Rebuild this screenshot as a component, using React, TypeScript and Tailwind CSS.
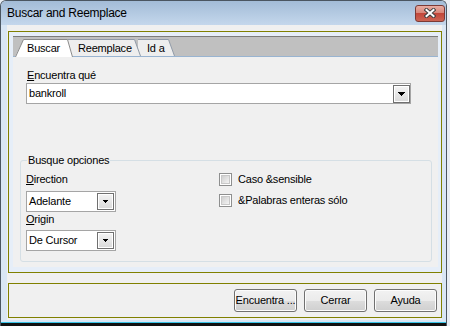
import type { ReactNode } from 'react';

function Arrow({ small }: { small?: boolean }) {
  return small ? (
    <svg width="5" height="3" viewBox="0 0 5 3" shapeRendering="crispEdges">
      <rect x="0" y="0" width="5" height="1" fill="#000" />
      <rect x="1" y="1" width="3" height="1" fill="#000" />
      <rect x="2" y="2" width="1" height="1" fill="#000" />
    </svg>
  ) : (
    <svg width="7" height="4" viewBox="0 0 7 4" shapeRendering="crispEdges">
      <rect x="0" y="0" width="7" height="1" fill="#000" />
      <rect x="1" y="1" width="5" height="1" fill="#000" />
      <rect x="2" y="2" width="3" height="1" fill="#000" />
      <rect x="3" y="3" width="1" height="1" fill="#000" />
    </svg>
  );
}

function Combo({ text, small, className }: { text: string; small?: boolean; className: string }) {
  return (
    <div className={`flex h-[21px] items-center border border-[#a5a5a5] bg-white pl-[2px] ${className}`}>
      <span className="flex-1 leading-[13px]">{text}</span>
      <div
        className={`flex items-center justify-center border border-[#707070] bg-[linear-gradient(to_bottom,#f4f4f4,#d9d9d9)] shadow-[inset_1px_1px_0_#fff,inset_-1px_-1px_0_#fff] ${
          small ? 'mr-[1px] h-[17px] w-[17px]' : 'mt-[1px] h-[18px] w-[17px]'
        }`}
      >
        <Arrow small={small} />
      </div>
    </div>
  );
}

function CheckRow({ label, className = '' }: { label: string; className?: string }) {
  return (
    <div className={`flex h-[13px] items-center ${className}`}>
      <div className="h-[13px] w-[13px] border border-[#8e8f8f] bg-white p-[1px]">
        <div className="h-full w-full border border-[#c8c8c8] bg-[linear-gradient(135deg,#cfcfcf,#f4f4f4)]" />
      </div>
      <span className="ml-[6px] leading-[13px]">{label}</span>
    </div>
  );
}

function Button({ children }: { children: ReactNode }) {
  return (
    <div className="flex h-[23px] w-[63px] items-center justify-center rounded-[3px] border border-[#707070] bg-[linear-gradient(to_bottom,#f2f2f2_0%,#ebebeb_50%,#dddddd_50%,#cfcfcf_100%)] shadow-[inset_0_0_0_1px_#fcfcfc] whitespace-nowrap">
      {children}
    </div>
  );
}

function Tab({
  width,
  textLeft,
  label,
  active,
  path,
  fill,
  className,
}: {
  width: number;
  textLeft: string;
  label: string;
  active?: boolean;
  path: string;
  fill: string;
  className: string;
}) {
  return (
    <div className={`relative h-[20px] ${className}`} style={{ width }}>
      <svg className="absolute inset-0" width={width} height="20" viewBox={`0 0 ${width} 20`}>
        <polygon points={fill} fill={active ? '#ffffff' : '#eeeeee'} />
        <path d={path} fill="none" stroke={active ? '#8a8a8a' : '#909aa8'} strokeWidth="1" />
      </svg>
      <span className={`relative flex h-full items-center pt-[2px] leading-[13px] ${textLeft}`}>{label}</span>
    </div>
  );
}

export default function App() {
  return (
    <div className="h-[326px] w-[450px] bg-[#e9eef4] font-['Liberation_Sans',Arial,sans-serif] text-[11px] tracking-[-0.2px] text-black">
      <div className="flex h-[326px] w-[447px] flex-col overflow-hidden rounded-t-[6px] border-x border-t border-[#4b5661] bg-[#d9e6f4]">
        <div className="flex h-[24px] items-center justify-between bg-[linear-gradient(to_bottom,#a3bcd7,#c4d7ec)] pl-[6px] pr-[1px]">
          <span className="text-[12px] tracking-[-0.25px]">Buscar and Reemplace</span>
          <div className="flex h-[17px] w-[30px] items-center justify-center rounded-[3px] border border-[#7b3a35] bg-[linear-gradient(to_bottom,#e8aca2_0%,#d8877a_45%,#c2473a_50%,#cc6453_100%)]">
            <svg width="12" height="10" viewBox="0 0 12 10">
              <path d="M2.5 2 L9.5 8 M9.5 2 L2.5 8" stroke="#404040" strokeWidth="4" strokeLinecap="square" />
              <path d="M2.5 2 L9.5 8 M9.5 2 L2.5 8" stroke="#ffffff" strokeWidth="2" strokeLinecap="square" />
            </svg>
          </div>
        </div>

        <div className="ml-[6px] mr-[4px] h-[295px] bg-[#f0f0f0] pt-[6px]">
          <div className="ml-[1px] h-[242px] border border-[#808000] bg-[#e6eef8] pl-[4px] pr-[3px] pt-[4px]">
            <div className="flex h-[231px] flex-col">
              <div className="relative h-[21px] border-t border-[#7c7c7c] bg-[#c0c0c0]">
                <div className="absolute inset-x-0 bottom-0 h-[1px] bg-[#99b4d1]" />
                <div className="relative flex pl-[2px]">
                  <Tab
                    width={58}
                    textLeft="pl-[12px]"
                    label="Buscar"
                    active
                    fill="0,20 8.5,2.5 52.5,2.5 58,20"
                    path="M0.5 20 L8.5 2.5 L52.5 2.5 L57.5 20"
                    className="z-[3]"
                  />
                  <Tab
                    width={73}
                    textLeft="pl-[10px]"
                    label="Reemplace"
                    fill="0,19 0,2.5 66.5,2.5 72.5,19"
                    path="M0 2.5 L66.5 2.5 L72.5 19"
                    className="z-[2] -ml-[5px]"
                  />
                  <Tab
                    width={37}
                    textLeft="pl-[9px]"
                    label="Id a"
                    fill="0,19 0,2.5 30.5,2.5 36.5,19"
                    path="M0 2.5 L30.5 2.5 L36.5 19"
                    className="z-[1] -ml-[3px]"
                  />
                </div>
              </div>

              <div className="flex-1 bg-[#f0f0f0] pt-[12px]">
                <div className="ml-[14px] h-[13px] leading-[13px]">
                  <span className="underline">E</span>ncuentra qué
                </div>
                <Combo text="bankroll" className="ml-[13px] mt-[1px] w-[385px]" />

                <div className="relative ml-[7px] mt-[56px] flex h-[102px] w-[412px] rounded-[3px] border border-[#d5dfe5] pt-[12px]">
                  <span className="absolute -top-[7px] left-[6px] bg-[#f0f0f0] px-[1px] leading-[13px]">Busque opciones</span>
                  <div className="ml-[5px] w-[90px]">
                    <div className="h-[13px] leading-[13px]">
                      <span className="underline">D</span>irection
                    </div>
                    <Combo text="Adelante" small className="mt-[5px] w-[90px]" />
                    <div className="mt-[1px] h-[13px] leading-[13px]">
                      <span className="underline">O</span>rigin
                    </div>
                    <Combo text="De Cursor" small className="mt-[4px] w-[90px]" />
                  </div>
                  <div className="ml-[103px]">
                    <CheckRow label="Caso &sensible" />
                    <CheckRow label="&Palabras enteras sólo" className="mt-[8px]" />
                  </div>
                </div>
              </div>
            </div>
          </div>

          <div className="ml-[1px] mt-[10px] flex h-[35px] justify-end gap-[7px] border border-[#808000] pr-[4px] pt-[5px]">
            <Button>Encuentra ...</Button>
            <Button>Cerrar</Button>
            <Button>Ayuda</Button>
          </div>
        </div>

        <div className="mt-auto h-[1px] bg-[#37c3e6]" />
        <div className="h-[3px] bg-[#111111]" />
      </div>
    </div>
  );
}
